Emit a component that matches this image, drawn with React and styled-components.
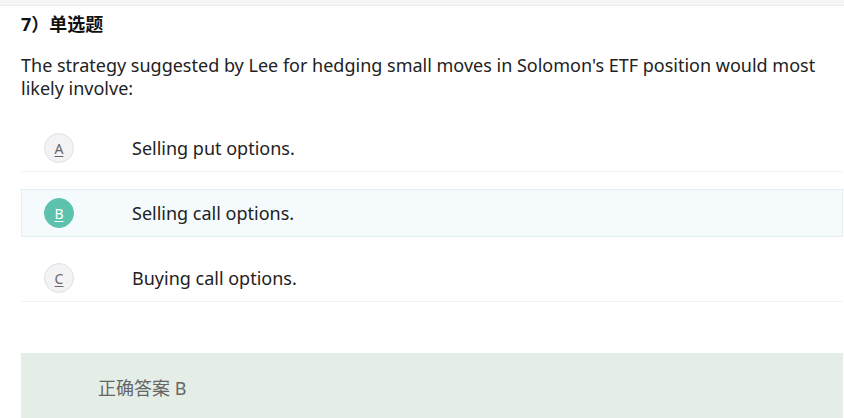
import React from 'react';
import styled, { createGlobalStyle } from 'styled-components';

const GlobalStyle = createGlobalStyle`
  html, body {
    margin: 0;
    padding: 0;
    background: #fff;
    font-family: "Noto Sans", "Noto Sans CJK SC", sans-serif;
    overflow: hidden;
  }
`;

const TopStrip = styled.div`
  height: 5px;
  background: #f6f6f6;
  border-bottom: 1px solid #ececec;
`;

const Page = styled.div`
  padding: 0 1px 0 21px;
`;

const Title = styled.h3`
  margin: 0;
  padding-top: 8px;
  font-size: 18px;
  line-height: 20px;
  font-weight: 700;
  color: #111;
`;

const Question = styled.p`
  margin: 20px 0 0;
  font-size: 18px;
  line-height: 23px;
  color: #222;
`;

const Options = styled.ul`
  list-style: none;
  margin: 24px 0 0;
  padding: 0;
  display: flex;
  flex-direction: column;
  gap: 17px;
`;

const Option = styled.li`
  display: flex;
  align-items: center;
  height: 48px;
  box-sizing: border-box;
  padding-left: 22px;
  border: 1px solid ${p => (p.$active ? '#e2eff4' : 'transparent')};
  border-bottom-color: ${p => (p.$active ? '#e2eff4' : '#f1f1f1')};
  background: ${p => (p.$active ? '#f5fbfd' : '#fff')};
`;

const Letter = styled.span`
  width: 30px;
  height: 30px;
  box-sizing: border-box;
  border-radius: 50%;
  display: flex;
  align-items: center;
  justify-content: center;
  font-size: 14px;
  text-decoration: underline;
  text-underline-offset: 2px;
  color: ${p => (p.$active ? '#fff' : '#666')};
  background: ${p => (p.$active ? '#5cc2ae' : '#f3f3f5')};
  border: 1px solid ${p => (p.$active ? '#5cc2ae' : '#e1e1e4')};
`;

const OptionText = styled.span`
  margin-left: 58px;
  font-size: 18px;
  color: #222;
`;

const Answer = styled.div`
  margin-top: 51px;
  height: 80px;
  background: #e4eee6;
  padding: 21px 0 0 77px;
  box-sizing: border-box;
  font-size: 18px;
  color: #666;
`;

const options = [
  { key: 'A', text: 'Selling put options.' },
  { key: 'B', text: 'Selling call options.', active: true },
  { key: 'C', text: 'Buying call options.' },
];

export default function App() {
  return (
    <>
      <GlobalStyle />
      <TopStrip />
      <Page>
        <Title>7）单选题</Title>
        <Question>
          The strategy suggested by Lee for hedging small moves in Solomon's ETF position would most
          likely involve:
        </Question>
        <Options>
          {options.map(o => (
            <Option key={o.key} $active={o.active}>
              <Letter $active={o.active}>{o.key}</Letter>
              <OptionText>{o.text}</OptionText>
            </Option>
          ))}
        </Options>
        <Answer>正确答案 B</Answer>
      </Page>
    </>
  );
}
